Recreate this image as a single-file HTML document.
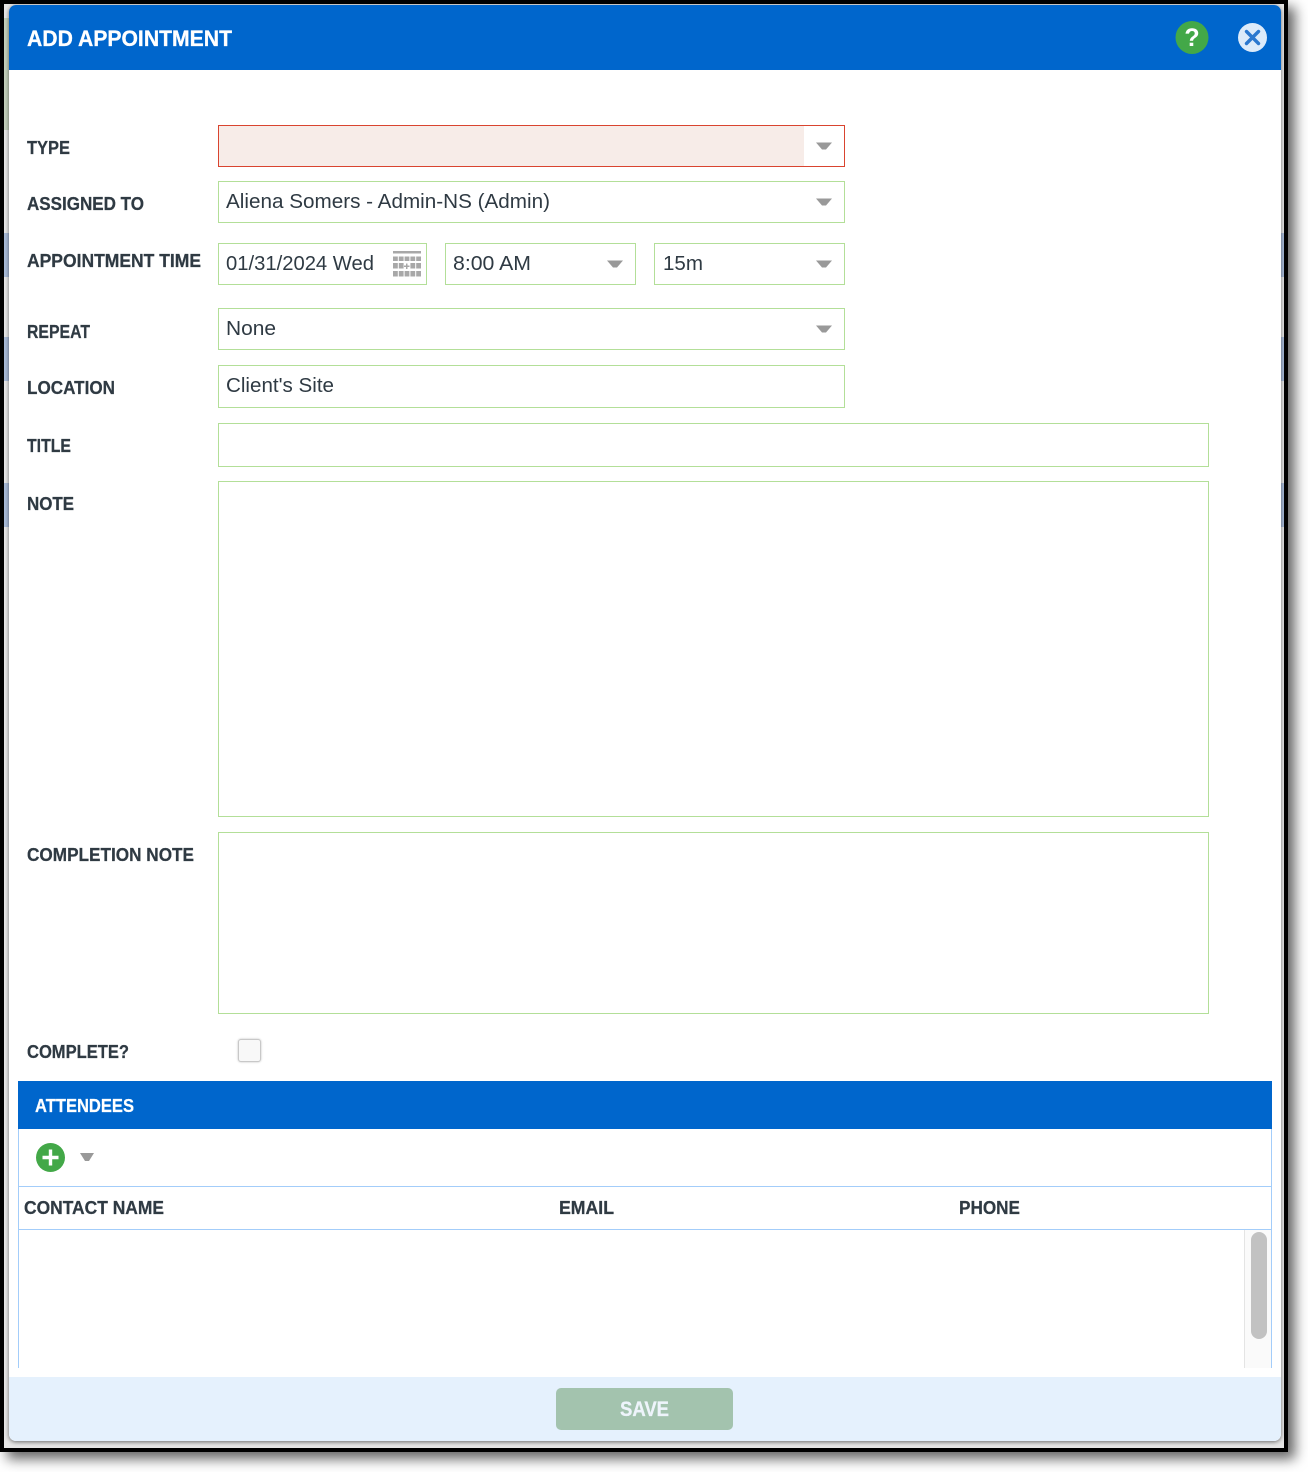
<!DOCTYPE html>
<html lang="en">
<head>
<meta charset="utf-8">
<title>Add Appointment</title>
<style>
html,body{margin:0;padding:0;background:#fff;}
body{position:relative;width:1308px;height:1472px;overflow:hidden;}
.abs,.box{position:absolute;box-sizing:border-box;}
.box{background:#fff;border:1px solid #b3df98;}
#frame{left:0;top:0;width:1288px;height:1452px;background:#000;box-shadow:7px 7px 12px rgba(0,0,0,.6);}
#strip{left:4px;top:4px;width:1280px;height:1444px;background:#e6e6e6;overflow:hidden;}
.patch{position:absolute;width:5px;height:44px;background:#a9bbd8;}
#dialog{left:9px;top:5px;width:1272px;height:1436px;background:#fff;border-radius:7px;box-shadow:0 1px 4px rgba(0,0,0,.55);overflow:hidden;}
#head{left:0;top:0;width:1272px;height:65px;background:#0066cc;}
#foot{left:0;top:1372px;width:1272px;height:64px;background:#e5f1fd;}
svg{position:absolute;left:0;top:0;}
text{font-family:"Liberation Sans",sans-serif;}
.l{font-weight:700;font-size:18px;fill:#2f3a43;stroke:#2f3a43;stroke-width:.25px;}
.v{font-size:20px;fill:#2f3a43;}
</style>
</head>
<body>
<div class="abs" id="frame"></div>
<div class="abs" id="strip">
  <div class="abs" style="left:0;top:14px;width:5px;height:112px;background:#c3d0bb"></div>
  <div class="patch" style="left:0;top:229px"></div>
  <div class="patch" style="left:0;top:333px"></div>
  <div class="patch" style="left:0;top:479px"></div>
  <div class="patch" style="left:1276px;top:229px"></div>
  <div class="patch" style="left:1276px;top:333px"></div>
  <div class="patch" style="left:1276px;top:479px"></div>
</div>
<div class="abs" id="dialog">
  <div class="abs" id="head"></div>
  <div class="abs" id="foot"></div>
</div>

<div class="box" style="left:218px;top:125px;width:627px;height:42px;border-color:#d9442f"><div class="abs" style="left:0;top:0;width:585px;height:40px;background:#f7ece8"></div></div>
<div class="box" style="left:218px;top:181px;width:627px;height:42px"></div>
<div class="box" style="left:218px;top:243px;width:209px;height:42px"></div>
<div class="box" style="left:445px;top:243px;width:191px;height:42px"></div>
<div class="box" style="left:654px;top:243px;width:191px;height:42px"></div>
<div class="box" style="left:218px;top:308px;width:627px;height:42px"></div>
<div class="box" style="left:218px;top:365px;width:627px;height:43px"></div>
<div class="box" style="left:218px;top:423px;width:991px;height:44px"></div>
<div class="box" style="left:218px;top:481px;width:991px;height:336px"></div>
<div class="box" style="left:218px;top:832px;width:991px;height:182px"></div>
<div class="box" style="left:238px;top:1039px;width:23px;height:23px;border:1px solid #c8c8c8;border-radius:3px;background:#f8f8f8;box-shadow:0 0 2px rgba(0,0,0,.25)"></div>

<div class="abs" style="left:18px;top:1081px;width:1254px;height:48px;background:#0066cc"></div>
<div class="abs" style="left:18px;top:1129px;width:1254px;height:239px;border-left:1px solid #a3cdfa;border-right:1px solid #a3cdfa;box-sizing:border-box"></div>
<div class="abs" style="left:18px;top:1186px;width:1254px;height:1px;background:#a3cdfa"></div>
<div class="abs" style="left:18px;top:1229px;width:1254px;height:1px;background:#a3cdfa"></div>
<div class="abs" style="left:1244px;top:1230px;width:27px;height:138px;background:#fafafa;border-left:1px solid #e4e4e4;box-sizing:border-box"></div>
<div class="abs" style="left:1251px;top:1232px;width:16px;height:107px;background:#c2c2c2;border-radius:8px"></div>
<div class="abs" style="left:556px;top:1388px;width:177px;height:42px;background:#a3c3ae;border-radius:5px"></div>

<svg width="1308" height="1472" viewBox="0 0 1308 1472" xmlns="http://www.w3.org/2000/svg">
  <text x="27" y="46" font-size="22" font-weight="700" fill="#fff" stroke="#fff" stroke-width=".3" textLength="205" lengthAdjust="spacingAndGlyphs">ADD APPOINTMENT</text>

  <circle cx="1192" cy="37.500" r="16.500" fill="#43a848"/>
  <text x="1192" y="46" font-size="25" font-weight="700" fill="#fff" text-anchor="middle">?</text>
  <circle cx="1252.500" cy="37.500" r="14.500" fill="#dcebfa"/>
  <path d="M1246.500 31.500 L1258.500 43.500 M1258.500 31.500 L1246.500 43.500" stroke="#2a78cf" stroke-width="3.400" stroke-linecap="round" fill="none"/>

  <text class="l" x="27" y="154" textLength="43" lengthAdjust="spacingAndGlyphs">TYPE</text>
  <text class="l" x="27" y="210" textLength="117" lengthAdjust="spacingAndGlyphs">ASSIGNED TO</text>
  <text class="l" x="27" y="267" textLength="174" lengthAdjust="spacingAndGlyphs">APPOINTMENT TIME</text>
  <text class="l" x="27" y="338" textLength="63" lengthAdjust="spacingAndGlyphs">REPEAT</text>
  <text class="l" x="27" y="394" textLength="88" lengthAdjust="spacingAndGlyphs">LOCATION</text>
  <text class="l" x="27" y="452" textLength="44" lengthAdjust="spacingAndGlyphs">TITLE</text>
  <text class="l" x="27" y="510" textLength="47" lengthAdjust="spacingAndGlyphs">NOTE</text>
  <text class="l" x="27" y="861" textLength="167" lengthAdjust="spacingAndGlyphs">COMPLETION NOTE</text>
  <text class="l" x="27" y="1058" textLength="102" lengthAdjust="spacingAndGlyphs">COMPLETE?</text>

  <text class="v" x="226" y="208" textLength="324" lengthAdjust="spacingAndGlyphs">Aliena Somers - Admin-NS (Admin)</text>
  <text class="v" x="226" y="270" textLength="148" lengthAdjust="spacingAndGlyphs">01/31/2024 Wed</text>
  <text class="v" x="453" y="270" textLength="78" lengthAdjust="spacingAndGlyphs">8:00 AM</text>
  <text class="v" x="663" y="270" textLength="40" lengthAdjust="spacingAndGlyphs">15m</text>
  <text class="v" x="226" y="335" textLength="50" lengthAdjust="spacingAndGlyphs">None</text>
  <text class="v" x="226" y="392" textLength="108" lengthAdjust="spacingAndGlyphs">Client's Site</text>

  <g fill="#999">
    <path d="M816 142.500 H832 L826 149.500 H822 Z"/>
    <path d="M816 198.500 H832 L826 205.500 H822 Z"/>
    <path d="M607 260.500 H623 L617 267.500 H613 Z"/>
    <path d="M816 260.500 H832 L826 267.500 H822 Z"/>
    <path d="M816 325.500 H832 L826 332.500 H822 Z"/>
    <path d="M80 1153 H94 L89 1161 H85 Z"/>
  </g>

  <g fill="#a8a8a8">
    <rect x="393" y="251" width="28" height="2.500"/>
    <rect x="393" y="256.500" width="4.800" height="4.500"/><rect x="398.800" y="256.500" width="4.800" height="4.500"/><rect x="404.600" y="256.500" width="4.800" height="4.500"/><rect x="410.400" y="256.500" width="4.800" height="4.500"/><rect x="416.200" y="256.500" width="4.800" height="4.500"/>
    <rect x="393" y="263" width="4.800" height="5.500"/><rect x="398.800" y="263" width="4.800" height="5.500"/><path d="M406 263.500 h1.500 v2 h2 v1.500 h-2 v2 h-1.500 v-2 h-2 v-1.500 h2 z"/><rect x="410.400" y="263" width="4.800" height="5.500"/><rect x="416.200" y="263" width="4.800" height="5.500"/>
    <rect x="393" y="271" width="4.800" height="5.500"/><rect x="398.800" y="271" width="4.800" height="5.500"/><rect x="404.600" y="271" width="4.800" height="5.500"/><rect x="410.400" y="271" width="4.800" height="5.500"/><rect x="416.200" y="271" width="4.800" height="5.500"/>
  </g>

  <text x="35" y="1112" font-size="18.500" font-weight="700" fill="#fff" stroke="#fff" stroke-width=".25" textLength="99" lengthAdjust="spacingAndGlyphs">ATTENDEES</text>
  <circle cx="50.500" cy="1157.500" r="14.500" fill="#43a848"/>
  <path d="M50.500 1149.500 V1165.500 M42.500 1157.500 H58.500" stroke="#fff" stroke-width="3.400" fill="none"/>

  <text class="l" x="24" y="1214" textLength="140" lengthAdjust="spacingAndGlyphs">CONTACT NAME</text>
  <text class="l" x="559" y="1214" textLength="55" lengthAdjust="spacingAndGlyphs">EMAIL</text>
  <text class="l" x="959" y="1214" textLength="61" lengthAdjust="spacingAndGlyphs">PHONE</text>

  <text x="620" y="1416" font-size="21" font-weight="700" fill="#eef4fb" stroke="#eef4fb" stroke-width=".3" textLength="49" lengthAdjust="spacingAndGlyphs">SAVE</text>
</svg>
</body>
</html>
